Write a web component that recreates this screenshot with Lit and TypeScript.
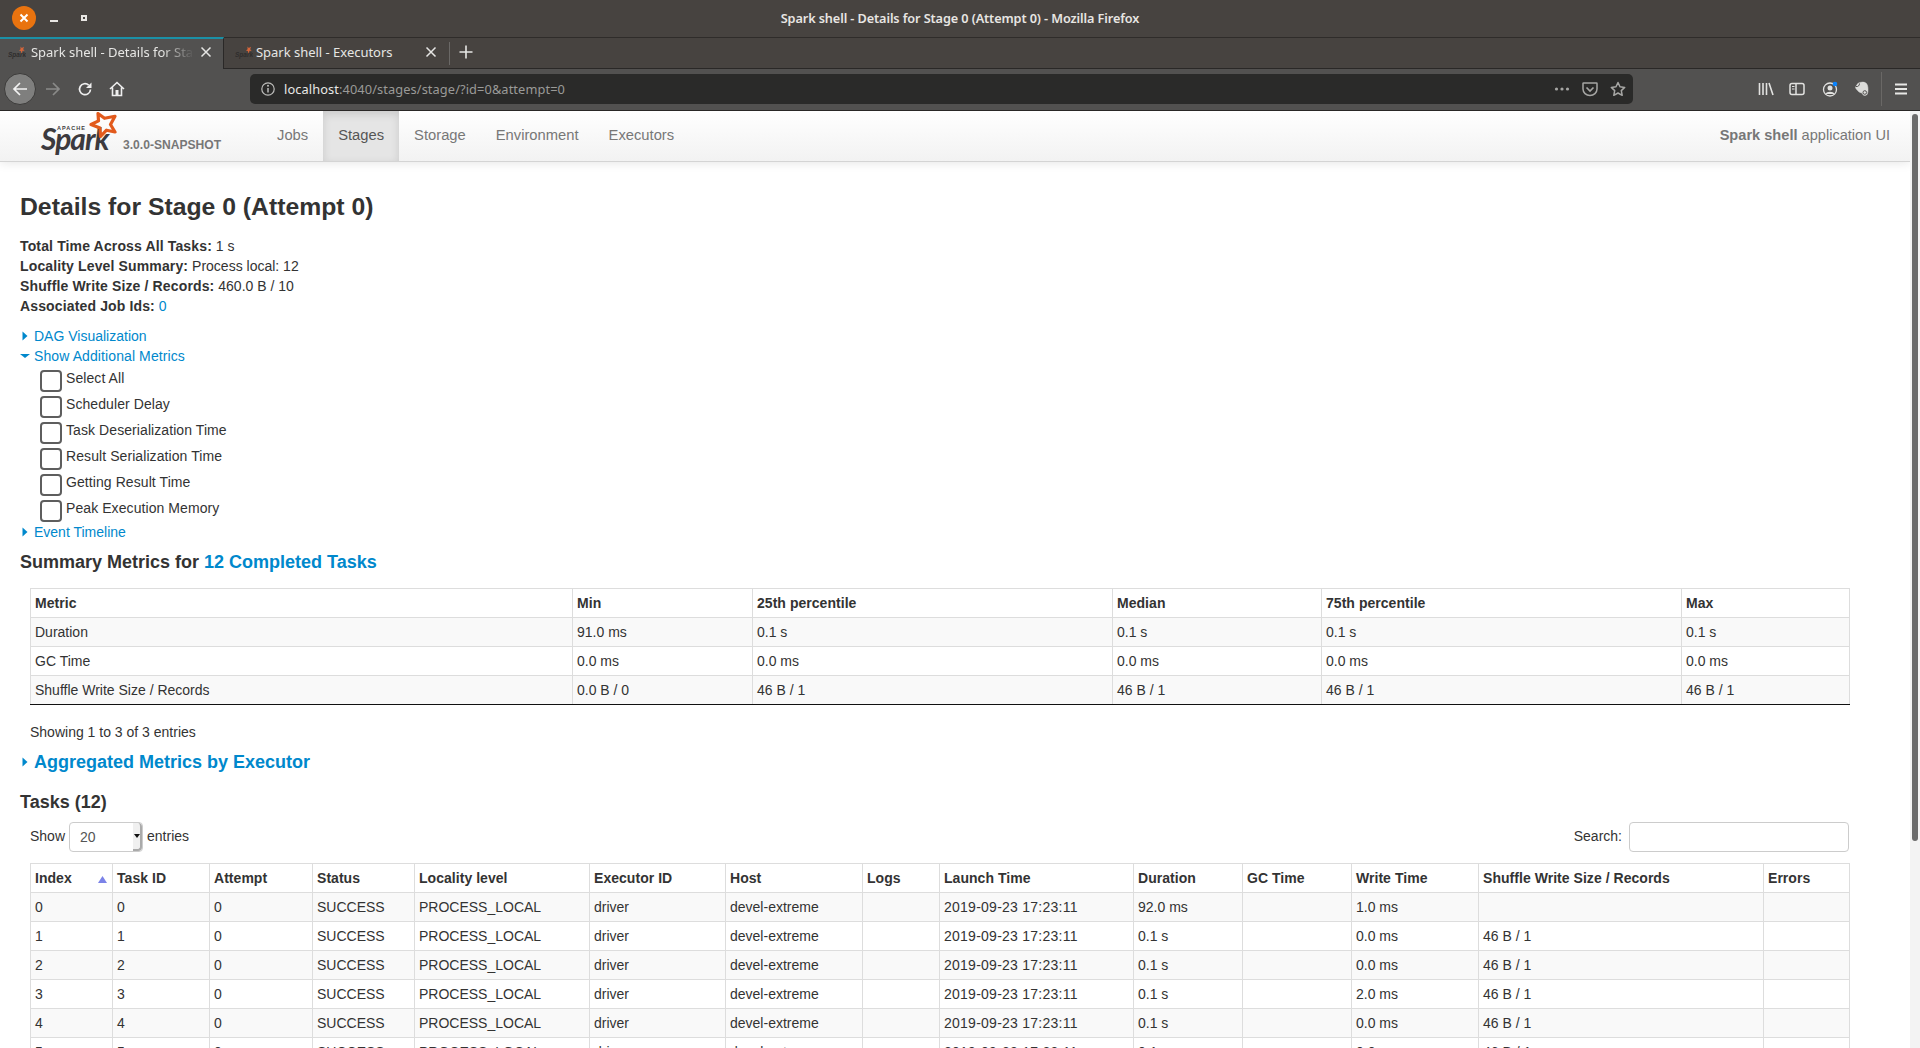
import { LitElement, html, css, svg } from "lit";
import { customElement } from "lit/decorators.js";

const summaryCols = [542, 180, 360, 209, 360, 168];
const summaryHead = ["Metric", "Min", "25th percentile", "Median", "75th percentile", "Max"];
const summaryRows = [
  ["Duration", "91.0 ms", "0.1 s", "0.1 s", "0.1 s", "0.1 s"],
  ["GC Time", "0.0 ms", "0.0 ms", "0.0 ms", "0.0 ms", "0.0 ms"],
  ["Shuffle Write Size / Records", "0.0 B / 0", "46 B / 1", "46 B / 1", "46 B / 1", "46 B / 1"],
];
const taskCols = [82, 97, 103, 102, 175, 136, 137, 77, 194, 109, 109, 127, 285, 86];
const taskHead = ["Index", "Task ID", "Attempt", "Status", "Locality level", "Executor ID", "Host", "Logs", "Launch Time", "Duration", "GC Time", "Write Time", "Shuffle Write Size / Records", "Errors"];
const taskRows = [
  ["0", "0", "92.0 ms", "1.0 ms", ""],
  ["1", "1", "0.1 s", "0.0 ms", "46 B / 1"],
  ["2", "2", "0.1 s", "0.0 ms", "46 B / 1"],
  ["3", "3", "0.1 s", "2.0 ms", "46 B / 1"],
  ["4", "4", "0.1 s", "0.0 ms", "46 B / 1"],
  ["5", "5", "0.1 s", "0.0 ms", "46 B / 1"],
];
const metrics = ["Select All", "Scheduler Delay", "Task Deserialization Time", "Result Serialization Time", "Getting Result Time", "Peak Execution Memory"];

const favicon = svg`<svg class="fav" viewBox="0 0 18 14"><text x="0" y="12" font-size="6.5" font-family="Liberation Sans" font-style="italic" font-weight="700" fill="#2f2d2c">Spark</text><path d="M12.5 1.5l1.3 1.4 2.2-1.2-.8 2.5 1.4 1.6-2.2-.1-.6 3-1-2.8-1.8-.4 1.6-1.3z" fill="#d8663a"/></svg>`;

@customElement("app-root")
export class AppRoot extends LitElement {
  static styles = css`
    :host { display: flex; flex-direction: column; width: 1920px; height: 1048px; overflow: hidden; background: #fff; font-family: "Liberation Sans", Arial, sans-serif; font-size: 14px; color: #333; }
    * { box-sizing: border-box; }
    a { color: #0088cc; text-decoration: none; }

    .titlebar { flex: none; height: 37px; background: #474340; display: grid; grid-template-columns: 1fr auto 1fr; align-items: center; font-family: "Noto Sans", sans-serif; padding-bottom: 1px; }
    .wctl { display: flex; align-items: center; }
    .wclose { width: 24px; height: 24px; border-radius: 50%; background: #e9730f; margin-left: 12px; display: flex; align-items: center; justify-content: center; }
    .wmin { width: 8px; height: 2px; background: #e8e6e3; margin: 6px 0 0 14px; }
    .wmax { width: 6px; height: 6px; border: 2px solid #e8e6e3; margin-left: 23px; }
    .wtitle { color: #e8e6e3; font-size: 12.7px; font-weight: 600; letter-spacing: -0.1px; }

    .tabs { flex: none; height: 32px; background: #474340; border-top: 1px solid #2f2c2a; border-bottom: 1px solid #2a2827; display: flex; align-items: stretch; font-family: "Noto Sans", sans-serif; font-size: 13px; color: #e6e6e4; }
    .tab { width: 224px; display: flex; align-items: center; flex: none; padding-bottom: 2px; }
    .tab.on { background: #525150; border-top: 2px solid #1b90a6; border-right: 1px solid #2a2827; margin-top: -1px; margin-bottom: -1px; padding-left: 8px; padding-bottom: 4px; }
    .tab.off { padding-left: 11px; }
    .fav { width: 18px; height: 14px; flex: none; }
    .tlabel { flex: 1; min-width: 0; white-space: nowrap; overflow: hidden; margin: 0 6px 0 5px; letter-spacing: -0.02px; }
    .tab.on .tlabel { -webkit-mask-image: linear-gradient(90deg, #000 80%, transparent); mask-image: linear-gradient(90deg, #000 80%, transparent); }
    .tab.off .tlabel { margin-left: 3px; }
    .tx { flex: none; width: 12px; height: 12px; margin-right: 11px; }
    .tsep { width: 1px; height: 23px; background: #6a6866; align-self: center; margin-left: 1px; }
    .plus { width: 16px; height: 16px; margin: 6px 0 0 8px; }

    .toolbar { flex: none; height: 42px; background: #525150; border-bottom: 1px solid #2a2827; display: flex; align-items: center; font-family: "Noto Sans", sans-serif; padding-bottom: 2px; }
    .back { width: 32px; height: 32px; margin-left: 4px; border-radius: 50%; background: #7f7f7e; border: 1px solid #3c3b3a; display: flex; align-items: center; justify-content: center; flex: none; }
    .ico { width: 16px; height: 16px; flex: none; }
    .urlbar { width: 1383px; height: 30px; margin-left: 125px; background: #2a2a29; border-radius: 5px; display: flex; align-items: center; color: #e8e8e6; font-size: 12.8px; flex: none; padding-left: 10px; }
    .urlbar .u { flex: 1; margin-left: 8px; letter-spacing: 0.1px; white-space: nowrap; }
    .urlbar .g { color: #9a9a98; }
    .tsep2 { width: 1px; height: 34px; background: #6a6866; flex: none; }

    .body { flex: 1; display: flex; min-height: 0; }
    .page { flex: 1; min-width: 0; overflow: hidden; }
    .sb { flex: none; width: 10px; background: #f3f3f3; padding: 3px 2px 0; }
    .thumb { height: 727px; background: #6b6b6b; border-radius: 3px; }

    .nav { height: 51px; background: linear-gradient(#fff, #f2f2f2); border-bottom: 1px solid #d4d4d4; box-shadow: 0 1px 10px rgba(0,0,0,.1); display: flex; align-items: stretch; padding-right: 20px; }
    .brand { width: 262px; position: relative; flex: none; }
    .spark { position: absolute; left: 41px; top: 20px; font-family: Lato, sans-serif; font-style: italic; font-weight: 700; font-size: 30px; line-height: 14px; letter-spacing: -1px; color: #3c3a3e; }
    .apache { position: absolute; left: 57px; top: 15px; font-size: 5.5px; line-height: 5px; font-weight: 700; letter-spacing: 1px; color: #3c3a3e; }
    .star { position: absolute; left: 87px; top: 1px; width: 31px; height: 26px; }
    .ver { position: absolute; left: 123px; top: 27px; font-size: 12.1px; line-height: 14px; font-weight: 700; color: #777; white-space: nowrap; }
    .nl { padding: 14px 15px 0; font-size: 14.75px; line-height: 20px; color: #777; }
    .nl.on { color: #555; background: #e5e5e5; box-shadow: inset 0 3px 8px rgba(0,0,0,.125); }
    .app { margin-left: auto; font-size: 14.6px; line-height: 20px; padding-top: 14px; color: #777; }

    .content { padding: 0 20px; }
    h3 { margin: 0; padding-top: 25px; font-size: 24.75px; line-height: 40px; font-weight: 700; color: #333; }
    .info { margin-top: 9px; line-height: 20px; }
    .info b { font-weight: 700; letter-spacing: 0.14px; }
    .tog { display: flex; align-items: center; line-height: 20px; color: #0088cc; }
    .wide { letter-spacing: 0.1px; }
    .tri { width: 10px; height: 10px; margin-right: 4px; flex: none; }
    .dag { margin-top: 10px; }
    .cbs { padding-left: 20px; height: 156px; }
    .cb { display: flex; height: 26px; }
    .box { width: 22px; height: 22px; border: 2px solid #5e5e5e; border-radius: 4px; background: #fff; margin-top: 4px; flex: none; }
    .cb span { margin-left: 4px; line-height: 20px; margin-top: 2px; letter-spacing: 0.08px; }
    h4 { margin: 0; font-size: 18px; line-height: 20px; font-weight: 700; color: #333; }
    .sum { margin-top: 10px; }
    table { table-layout: fixed; border-collapse: collapse; width: 1819px; margin-left: 10px; font-size: 14px; }
    th, td { border: 1px solid #ddd; padding: 0 4px; height: 29px; line-height: 20px; text-align: left; white-space: nowrap; overflow: hidden; font-weight: 400; color: #333; }
    th { font-weight: 700; position: relative; letter-spacing: 0.04px; }
    td.date { letter-spacing: 0.25px; }
    tbody tr:nth-child(odd) td { background: #f9f9f9; }
    .t1 { margin-top: 16px; }
    .t1 tbody tr:last-child td { border-bottom-color: #111; }
    .sorti { position: absolute; right: 5px; top: 12px; width: 9px; height: 7px; }
    .showing { margin: 17px 0 0 10px; line-height: 20px; }
    .agg { margin-top: 10px; font-size: 18px; font-weight: 700; line-height: 20px; color: #0088cc; display: flex; align-items: center; }
    .tasks { margin-top: 20px; }
    .ctl { display: flex; align-items: center; margin: 10px 0 11px 10px; width: 1819px; height: 30px; line-height: 20px; }
    .ctl span { margin-bottom: 2px; }
    .sel { width: 74px; height: 30px; border: 1px solid #ccc; border-radius: 4px; margin: 0 4px 0 4px; padding-left: 10px; display: flex; align-items: center; color: #555; position: relative; background: #fff; flex: none; }
    .spin { position: absolute; right: 0; top: 0; bottom: 0; width: 9px; background: #f0f0f0; border-right: 2px solid #aaa; border-bottom: 2px solid #aaa; border-radius: 0 4px 4px 0; }
    .spin::after { content: ""; position: absolute; left: 1px; top: 11px; border: 3px solid transparent; border-top: 4px solid #111; }
    .grow { flex: 1; }
    .search { width: 220px; height: 30px; border: 1px solid #ccc; border-radius: 4px; margin-left: 7px; background: #fff; flex: none; }
  `;

  private tri(open = false) {
    return html`<svg class="tri" viewBox="0 0 10 10">${open
      ? svg`<path d="M0 3h10L5 7z" fill="#0088cc"/>`
      : svg`<path d="M2.5 0.5l5 4.5-5 4.5z" fill="#0088cc"/>`}</svg>`;
  }

  private x() {
    return html`<svg class="tx" viewBox="0 0 12 12"><path d="M1.5 1.5l9 9M10.5 1.5l-9 9" stroke="#e6e6e4" stroke-width="1.5" fill="none"/></svg>`;
  }

  private cols(list: number[]) {
    return html`<colgroup>${list.map((w) => html`<col style="width:${w}px" />`)}</colgroup>`;
  }

  render() {
    return html`
      <div class="titlebar">
        <div class="wctl">
          <div class="wclose"><svg width="10" height="10" viewBox="0 0 10 10"><path d="M1.5 1.5l7 7M8.5 1.5l-7 7" stroke="#fff" stroke-width="2"/></svg></div>
          <div class="wmin"></div>
          <div class="wmax"></div>
        </div>
        <div class="wtitle">Spark shell - Details for Stage 0 (Attempt 0) - Mozilla Firefox</div>
        <div></div>
      </div>
      <div class="tabs">
        <div class="tab on">${favicon}<span class="tlabel">Spark shell - Details for Stage 0 (Attempt 0)</span>${this.x()}</div>
        <div class="tab off">${favicon}<span class="tlabel">Spark shell - Executors</span>${this.x()}</div>
        <div class="tsep"></div>
        <svg class="plus" viewBox="0 0 16 16"><path d="M8 1.5v13M1.5 8h13" stroke="#e6e6e4" stroke-width="1.6"/></svg>
      </div>
      <div class="toolbar">
        <div class="back"><svg class="ico" viewBox="0 0 16 16"><path d="M15 8H2M8 2L2 8l6 6" stroke="#f2f2f2" stroke-width="1.7" fill="none"/></svg></div>
        <svg class="ico" style="margin-left:9px" viewBox="0 0 16 16"><path d="M1 8h13M8 2l6 6-6 6" stroke="#8a8a89" stroke-width="1.7" fill="none"/></svg>
        <svg class="ico" style="margin-left:16px" viewBox="0 0 16 16"><path d="M13.5 8.5a5.5 5.5 0 1 1-1.8-4.4" stroke="#eee" stroke-width="1.7" fill="none"/><path d="M14.5 1.5v5.5h-5.500z" fill="#eee"/></svg>
        <svg class="ico" style="margin-left:16px" viewBox="0 0 16 16"><path d="M1 8l7-6.500L15 8M3.500 6.500V14.500h9V6.500" stroke="#eee" stroke-width="1.6" fill="none"/><rect x="6.500" y="9" width="3" height="5.500" fill="#eee"/></svg>
        <div class="urlbar">
          <svg class="ico" viewBox="0 0 16 16"><circle cx="8" cy="8" r="6.200" stroke="#bdbdbb" stroke-width="1.200" fill="none"/><path d="M8 7v4.500" stroke="#bdbdbb" stroke-width="1.500"/><circle cx="8" cy="4.800" r="1" fill="#bdbdbb"/></svg>
          <span class="u">localhost<span class="g">:4040/stages/stage/?id=0&amp;attempt=0</span></span>
          <svg class="ico" viewBox="0 0 16 16"><circle cx="2.500" cy="8" r="1.600" fill="#a6a6a4"/><circle cx="8" cy="8" r="1.600" fill="#a6a6a4"/><circle cx="13.500" cy="8" r="1.600" fill="#a6a6a4"/></svg>
          <svg class="ico" style="margin-left:12px" viewBox="0 0 16 16"><path d="M1.500 2h13a.5.5 0 0 1 .5.5V8a7 6.500 0 0 1-14 0V2.500a.5.5 0 0 1 .5-.5z" stroke="#a6a6a4" stroke-width="1.500" fill="none"/><path d="M4.500 6.500L8 10l3.500-3.500" stroke="#a6a6a4" stroke-width="1.700" fill="none"/></svg>
          <svg class="ico" style="margin-left:12px; margin-right:7px" viewBox="0 0 16 16"><path d="M8 1.500l2 4.300 4.700.6-3.400 3.200.9 4.700L8 12l-4.200 2.300.9-4.700L1.300 6.400 6 5.800z" stroke="#a6a6a4" stroke-width="1.500" fill="none" stroke-linejoin="round"/></svg>
        </div>
        <svg class="ico" style="margin-left:125px" viewBox="0 0 16 16"><path d="M1.500 2v12M5 2v12M8.500 2v12M11 2l4 12" stroke="#e2e2e0" stroke-width="1.600" fill="none"/></svg>
        <svg class="ico" style="margin-left:15px" viewBox="0 0 16 16"><rect x="1" y="2.500" width="14" height="11" rx="2" stroke="#e2e2e0" stroke-width="1.500" fill="none"/><path d="M7 2.500v11" stroke="#e2e2e0" stroke-width="1.500"/><path d="M3 5.500h2.500M3 8h2.500" stroke="#e2e2e0" stroke-width="1.200"/></svg>
        <svg class="ico" style="margin-left:17px" viewBox="0 0 16 16"><circle cx="8" cy="8.500" r="6.500" stroke="#e2e2e0" stroke-width="1.300" fill="none"/><circle cx="8" cy="7" r="2.500" fill="#e2e2e0"/><path d="M3.500 13c1-3 8-3 9 0z" fill="#e2e2e0"/><circle cx="13" cy="3" r="2.300" fill="#0a84ff"/></svg>
        <svg class="ico" style="margin-left:16px" viewBox="0 0 16 16"><path d="M3 3.500C4 1.500 8.500.5 11 1.500c2.500 1 3 4 3 7 0 3-.5 6-3 6-2 0-2.500-1.500-3-2.500-1.500-.5-2.500-.5-3.500-1.500C3 9 1.500 7 1.500 6.500z" fill="#dcdcda" stroke="#dcdcda" stroke-width=".5"/><path d="M2 5.500c2 .5 3.500-1 3.500-3" stroke="#525150" stroke-width="1" fill="none"/><circle cx="10.800" cy="11.500" r="1.800" fill="none" stroke="#525150" stroke-width="1"/></svg>
        <div class="tsep2" style="margin-left:11px"></div>
        <svg class="ico" style="margin-left:11px" viewBox="0 0 16 16"><path d="M2 3.500h12M2 8h12M2 12.500h12" stroke="#e8e8e6" stroke-width="1.900"/></svg>
      </div>
      <div class="body">
        <div class="page">
          <div class="nav">
            <div class="brand">
              <span class="spark">Spark</span>
              <span class="apache">APACHE</span>
              <svg class="star" viewBox="0 0 31 26"><path d="M11 1.500l6.500 4.800 10.500-2-4.500 8.200 4.500 7.500-8.500-1.800L13.500 24.500 13 16 4 12.500l7.500-3.600z" fill="none" stroke="#e25a1c" stroke-width="3.200" stroke-linejoin="round"/></svg>
              <span class="ver">3.0.0-SNAPSHOT</span>
            </div>
            <div class="nl">Jobs</div>
            <div class="nl on">Stages</div>
            <div class="nl">Storage</div>
            <div class="nl">Environment</div>
            <div class="nl">Executors</div>
            <div class="app"><b>Spark shell</b> application UI</div>
          </div>
          <div class="content">
            <h3>Details for Stage 0 (Attempt 0)</h3>
            <div class="info">
              <div><b>Total Time Across All Tasks:</b> 1 s</div>
              <div><b>Locality Level Summary:</b> Process local: 12</div>
              <div><b>Shuffle Write Size / Records:</b> 460.0 B / 10</div>
              <div><b>Associated Job Ids:</b> <a>0</a></div>
            </div>
            <div class="tog dag">${this.tri()}<span>DAG Visualization</span></div>
            <div class="tog">${this.tri(true)}<span class="wide">Show Additional Metrics</span></div>
            <div class="cbs">
              ${metrics.map((m) => html`<div class="cb"><div class="box"></div><span>${m}</span></div>`)}
            </div>
            <div class="tog">${this.tri()}<span>Event Timeline</span></div>
            <h4 class="sum">Summary Metrics for <a>12 Completed Tasks</a></h4>
            <table class="t1">
              ${this.cols(summaryCols)}
              <thead><tr>${summaryHead.map((h) => html`<th>${h}</th>`)}</tr></thead>
              <tbody>${summaryRows.map((r) => html`<tr>${r.map((c) => html`<td>${c}</td>`)}</tr>`)}</tbody>
            </table>
            <div class="showing">Showing 1 to 3 of 3 entries</div>
            <div class="agg">${this.tri()}<span>Aggregated Metrics by Executor</span></div>
            <h4 class="tasks">Tasks (12)</h4>
            <div class="ctl">
              <span>Show</span>
              <div class="sel">20<div class="spin"></div></div>
              <span>entries</span>
              <div class="grow"></div>
              <span>Search:</span>
              <div class="search"></div>
            </div>
            <table>
              ${this.cols(taskCols)}
              <thead><tr>${taskHead.map((h, i) => html`<th>${h}${i === 0 ? html`<svg class="sorti" viewBox="0 0 9 7"><path d="M4.500 0L9 7H0z" fill="#7b83e8"/></svg>` : ""}</th>`)}</tr></thead>
              <tbody>
                ${taskRows.map((r) => html`<tr>
                  <td>${r[0]}</td><td>${r[1]}</td><td>0</td><td>SUCCESS</td><td>PROCESS_LOCAL</td><td>driver</td><td>devel-extreme</td><td></td>
                  <td class="date">2019-09-23 17:23:11</td><td>${r[2]}</td><td></td><td>${r[3]}</td><td>${r[4]}</td><td></td>
                </tr>`)}
              </tbody>
            </table>
          </div>
        </div>
        <div class="sb"><div class="thumb"></div></div>
      </div>
    `;
  }
}
